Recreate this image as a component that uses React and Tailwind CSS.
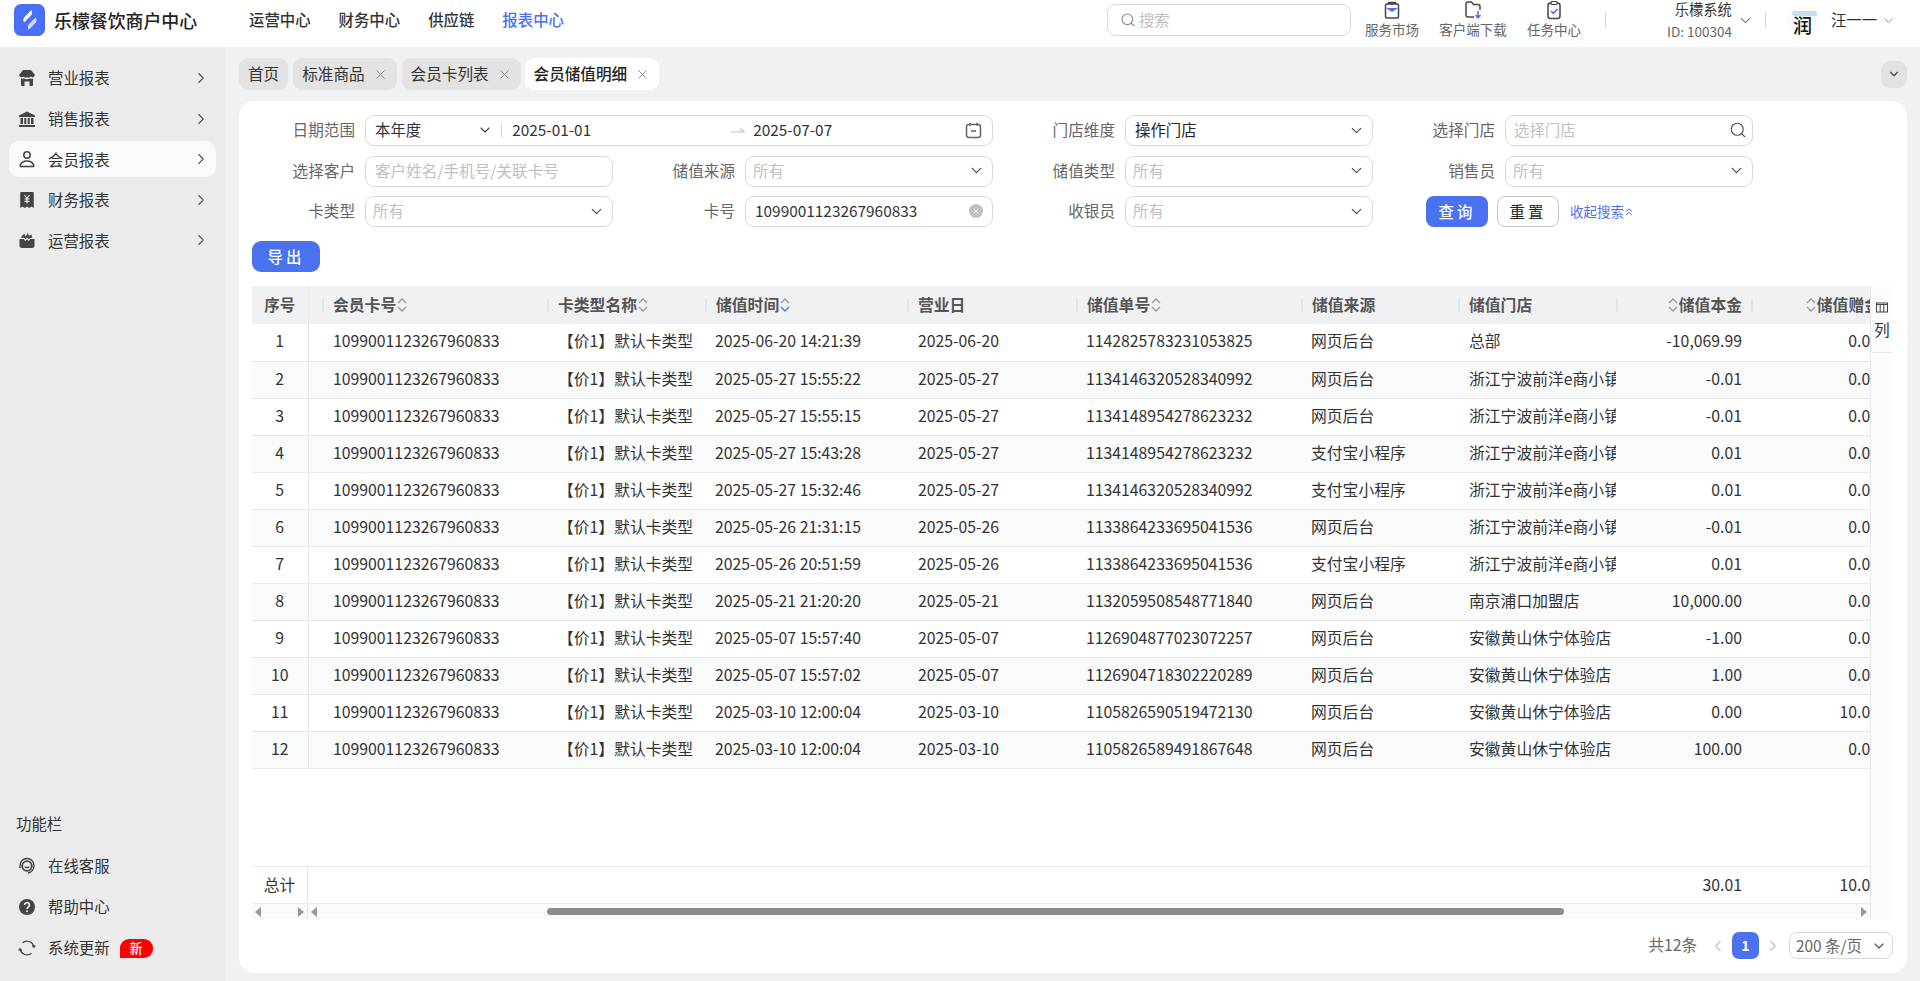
import React from "react";
import { ChevronDown, ChevronRight, ChevronLeft, Search, X } from "lucide-react";

const rows = [
  ["2025-06-20 14:21:39", "2025-06-20", "1142825783231053825", "网页后台", "总部", "-10,069.99", "0.00"],
  ["2025-05-27 15:55:22", "2025-05-27", "1134146320528340992", "网页后台", "浙江宁波前洋e商小镇店", "-0.01", "0.00"],
  ["2025-05-27 15:55:15", "2025-05-27", "1134148954278623232", "网页后台", "浙江宁波前洋e商小镇店", "-0.01", "0.00"],
  ["2025-05-27 15:43:28", "2025-05-27", "1134148954278623232", "支付宝小程序", "浙江宁波前洋e商小镇店", "0.01", "0.00"],
  ["2025-05-27 15:32:46", "2025-05-27", "1134146320528340992", "支付宝小程序", "浙江宁波前洋e商小镇店", "0.01", "0.00"],
  ["2025-05-26 21:31:15", "2025-05-26", "1133864233695041536", "网页后台", "浙江宁波前洋e商小镇店", "-0.01", "0.00"],
  ["2025-05-26 20:51:59", "2025-05-26", "1133864233695041536", "支付宝小程序", "浙江宁波前洋e商小镇店", "0.01", "0.00"],
  ["2025-05-21 21:20:20", "2025-05-21", "1132059508548771840", "网页后台", "南京浦口加盟店", "10,000.00", "0.00"],
  ["2025-05-07 15:57:40", "2025-05-07", "1126904877023072257", "网页后台", "安徽黄山休宁体验店", "-1.00", "0.00"],
  ["2025-05-07 15:57:02", "2025-05-07", "1126904718302220289", "网页后台", "安徽黄山休宁体验店", "1.00", "0.00"],
  ["2025-03-10 12:00:04", "2025-03-10", "1105826590519472130", "网页后台", "安徽黄山休宁体验店", "0.00", "10.00"],
  ["2025-03-10 12:00:04", "2025-03-10", "1105826589491867648", "网页后台", "安徽黄山休宁体验店", "100.00", "0.00"],
];

function StoreIcon() {
  return (
    <svg width="18" height="18" viewBox="0 0 18 18" fill="#444">
      <path d="M5 1h8l4 5a2.6 2.6 0 0 1-4.200 1.600A3.200 3.200 0 0 1 9 8.200a3.200 3.200 0 0 1-3.800-.6A2.600 2.600 0 0 1 1 6z" />
      <path d="M3 9.600c1 .3 2 .2 2.800-.2 2 1 4.400 1 6.400 0 .8.400 1.800.5 2.800.2V16a1 1 0 0 1-1 1h-2.500v-4.500H6.500V17H4a1 1 0 0 1-1-1z" />
    </svg>
  );
}

function BankIcon() {
  return (
    <svg width="18" height="18" viewBox="0 0 18 18" fill="#444">
      <path d="M9 1.500 17 5.500V7H1V5.500z" />
      <path d="M2.500 8h2.500v6H2.500zM6.300 8h2v6h-2zM9.700 8h2v6h-2zM13 8h2.500v6H13zM1 15h16v2H1z" />
    </svg>
  );
}

function UserIcon() {
  return (
    <svg width="18" height="18" viewBox="0 0 18 18" fill="none" stroke="#444" strokeWidth="1.500">
      <circle cx="9" cy="5" r="3.200" />
      <path d="M3 16.500c-.6 0-1-.5-.8-1.100C3 13 5.500 11 9 11s6 2 6.800 4.400c.2.600-.2 1.100-.8 1.100z" />
    </svg>
  );
}

function ReceiptIcon() {
  return (
    <svg width="18" height="18" viewBox="0 0 18 18">
      <path d="M3 1h12a.8.8 0 0 1 .8.8V17l-2.300-1.500L11.200 17 9 15.500 6.800 17l-2.300-1.500L2.200 17V1.800A.8.800 0 0 1 3 1z" fill="#444" />
      <path d="M6.500 4 9 7.500 11.500 4M9 7.500V12.500M6.500 8h5M6.500 10.300h5" stroke="#ebebeb" strokeWidth="1.200" fill="none" />
    </svg>
  );
}

function BagIcon() {
  return (
    <svg width="18" height="18" viewBox="0 0 18 18" fill="#444">
      <path d="M1.500 8h4.200l1.500 2L9 8.200 10.600 10l2-2h3.900v6.500a2.500 2.500 0 0 1-2.500 2.500H4a2.500 2.500 0 0 1-2.500-2.500z" />
      <path d="M3 6.800C3.500 5 5 3.500 6.500 3l1 2.500L10 2l1 3 2.500-1.500.8 3.300h-2.100l-1.500 1.400L9 6.600 7.400 8.200 6.200 6.800z" />
    </svg>
  );
}

function HeadsetIcon() {
  return (
    <svg width="18" height="18" viewBox="0 0 18 18" fill="none" stroke="#444">
      <path d="M2 11V8.500a7 7 0 0 1 14 0c0 4-2.500 7-6 7.500" strokeWidth="1.400" />
      <circle cx="9" cy="9" r="4.800" strokeWidth="1.800" />
      <path d="M6.800 9.500c.5 1.500 3.900 1.500 4.400 0" strokeWidth="1.200" />
    </svg>
  );
}

function HelpIcon() {
  return (
    <svg width="18" height="18" viewBox="0 0 18 18">
      <circle cx="9" cy="9" r="8" fill="#444" />
      <path d="M6.600 7a2.400 2.400 0 1 1 3.700 2c-.9.600-1.300 1-1.300 2" stroke="#ebebeb" strokeWidth="1.700" fill="none" />
      <circle cx="9" cy="13.300" r="1" fill="#ebebeb" />
    </svg>
  );
}

function RefreshIcon() {
  return (
    <svg width="18" height="18" viewBox="0 0 18 18" fill="none" stroke="#444" strokeWidth="1.200">
      <path d="M4.500 3.800A7 7 0 0 1 15.800 7.500" />
      <path d="M13.500 14.200A7 7 0 0 1 2.200 10.500" />
      <path d="M14.200 6.500 16 8.300l1.300-1.900M3.800 11.500 2 9.700.7 11.600" />
    </svg>
  );
}

function Logo() {
  return (
    <div className="w-[31px] h-[32px] rounded-[7px] bg-[#4a6ef5] flex items-center justify-center">
      <svg width="20" height="22" viewBox="0 0 20 22" fill="#fff">
        <path d="M11.500 1 5 7.500c-2 2-2 4 -1 6l7-7c1-1 1.500-3 .5-5.500z" />
        <path d="M15.500 8.500 9 15c-1 1-1.500 3-.5 6l6.500-6.500c2-2 2-4 .5-6z" opacity=".75" />
      </svg>
    </div>
  );
}

function TopIcon({ children }) {
  return (
    <svg width="20" height="20" viewBox="0 0 20 20" fill="none">
      {children}
    </svg>
  );
}

function TopAction({ label, icon }) {
  return (
    <div className="h-[40px] flex flex-col items-center text-[13.500px] leading-[18px] text-[#666]">
      <div className="h-[20px]">{icon}</div>
      <span className="whitespace-nowrap">{label}</span>
    </div>
  );
}

function Header() {
  return (
    <header className="h-[47px] bg-white flex items-center shrink-0 pb-[7px]">
      <div className="ml-[14px]">
        <Logo />
      </div>
      <div className="ml-[9px] w-[143px] text-[17.900px] font-medium text-[#222] whitespace-nowrap">乐檬餐饮商户中心</div>
      <nav className="ml-[52px] flex items-center gap-[28px] text-[15.400px] font-medium text-[#333]">
        <span>运营中心</span>
        <span>财务中心</span>
        <span>供应链</span>
        <span className="text-[#4a72ee]">报表中心</span>
      </nav>
      <div className="ml-[543px] w-[244px] h-[32px] rounded-[9px] border border-[#d9d9d9] flex items-center pl-[12px]">
        <Search size={16} color="#8c8c8c" strokeWidth={1.700} />
        <span className="ml-[3px] text-[15.400px] text-[#bfbfbf]">搜索</span>
      </div>
      <div className="ml-[14px] w-[216px] flex justify-between">
        <TopAction
          label="服务市场"
          icon={
            <TopIcon>
              <path d="M6.500 4V2.500h7V4M5 4h10a1.500 1.500 0 0 1 1.500 1.500v11A1.500 1.500 0 0 1 15 18H5a1.500 1.500 0 0 1-1.500-1.500v-11A1.500 1.500 0 0 1 5 4z" stroke="#444" strokeWidth="1.500" />
              <path d="M4 8h12l-6 4z" fill="#4a72ee" />
            </TopIcon>
          }
        />
        <TopAction
          label="客户端下载"
          icon={
            <TopIcon>
              <path d="M11 17H5a2 2 0 0 1-2-2V4a2 2 0 0 1 2-2h3.500l2 2.500H15a2 2 0 0 1 2 2V10" stroke="#444" strokeWidth="1.500" />
              <path d="M15 11v6M12.500 15l2.500 2.800 2.500-2.800" stroke="#4a72ee" strokeWidth="1.600" />
            </TopIcon>
          }
        />
        <TopAction
          label="任务中心"
          icon={
            <TopIcon>
              <rect x="4" y="3" width="12" height="15.500" rx="2.500" stroke="#444" strokeWidth="1.500" />
              <rect x="7" y="1.500" width="6" height="3" rx="1" fill="#fff" stroke="#444" strokeWidth="1.200" />
              <path d="m7 11 2.300 2.300L13.500 9" stroke="#4a72ee" strokeWidth="1.700" />
            </TopIcon>
          }
        />
      </div>
      <div className="ml-[24px] w-px h-[16px] bg-[#d9d9d9]" />
      <div className="ml-[61px] flex flex-col items-end -mt-[1px]">
        <span className="text-[14.300px] leading-[23px] text-[#333] whitespace-nowrap">乐檬系统</span>
        <span className="text-[13.500px] leading-[23px] text-[#666] whitespace-nowrap">ID: 100304</span>
      </div>
      <ChevronDown className="ml-[5px]" size={17} color="#777" strokeWidth={1.500} />
      <div className="ml-[11px] w-px h-[16px] bg-[#d9d9d9]" />
      <div className="ml-[20px] w-[33px] h-[31px] rounded-full bg-[#fbfbfb] overflow-hidden flex flex-col items-center">
        <div className="mt-[6px] ml-[6px] w-[26px] h-[5px] rounded-full bg-[#c4e0ee]" />
        <span className="-mt-[1px] text-[19px] leading-[20px] font-medium text-[#111]">润</span>
      </div>
      <span className="ml-[12px] text-[15.400px] text-[#333] whitespace-nowrap">汪一一</span>
      <ChevronDown className="ml-[4px]" size={15} color="#8c8c8c" strokeWidth={1.500} />
    </header>
  );
}

function SideItem({ icon, label, active, arrow, badge }) {
  return (
    <div className={`h-[36px] rounded-[10px] flex items-center pl-[9px] pr-[6px] ${active ? "bg-[#fafafa]" : ""}`}>
      <div className="w-[18px] h-[18px]">{icon}</div>
      <span className="ml-[12px] text-[15.400px] text-[#333] whitespace-nowrap">{label}</span>
      {badge && (
        <span className="ml-[10px] w-[33px] h-[19px] rounded-[9px] rounded-bl-none bg-[#ff0000] text-white text-[13px] font-medium flex items-center justify-center">
          {badge}
        </span>
      )}
      {arrow && <ChevronRight className="ml-auto" size={18} color="#555" strokeWidth={1.500} />}
    </div>
  );
}

function Sidebar() {
  return (
    <aside className="w-[225px] shrink-0 bg-[#ebebeb] flex flex-col px-[9px] pt-[13px] pb-[15px]">
      <div className="flex flex-col gap-[4.600px]">
        <SideItem icon={<StoreIcon />} label="营业报表" arrow />
        <SideItem icon={<BankIcon />} label="销售报表" arrow />
        <SideItem icon={<UserIcon />} label="会员报表" arrow active />
        <SideItem icon={<ReceiptIcon />} label="财务报表" arrow />
        <SideItem icon={<BagIcon />} label="运营报表" arrow />
      </div>
      <div className="mt-auto">
        <div className="ml-[7px] h-[22px] leading-[22px] text-[15.400px] text-[#333]">功能栏</div>
        <div className="mt-[14px] flex flex-col gap-[5px]">
          <SideItem icon={<HeadsetIcon />} label="在线客服" />
          <SideItem icon={<HelpIcon />} label="帮助中心" />
          <SideItem icon={<RefreshIcon />} label="系统更新" badge="新" />
        </div>
      </div>
    </aside>
  );
}

function Tab({ label, closable, active }) {
  return (
    <div className={`h-[32px] rounded-[9px] flex items-center px-[9px] text-[15.600px] whitespace-nowrap ${active ? "-ml-[1px] bg-white text-[#222] font-medium" : "bg-[#e3e3e3] text-[#333]"}`}>
      <span>{label}</span>
      {closable && <X className="ml-[8px]" size={15} color="#888" strokeWidth={1.500} />}
    </div>
  );
}

function Label({ children }) {
  return <span className="w-[126px] shrink-0 pr-[10px] pb-[1px] text-right text-[15.600px] text-[#666] whitespace-nowrap">{children}</span>;
}

function Field({ label, children, className = "" }) {
  return (
    <div className={`flex items-center h-[31px] ${className}`}>
      <Label>{label}</Label>
      <div className="flex-1 h-full pb-[1px] rounded-[9px] border border-[#d9d9d9] flex items-center text-[15.400px] text-[#333] min-w-0">{children}</div>
    </div>
  );
}

function SelectField({ label, value, dark }) {
  return (
    <Field label={label}>
      <span className={dark ? "ml-[9px] text-[#222]" : "ml-[7px] text-[#bfbfbf]"}>{value}</span>
      <ChevronDown className="ml-auto mr-[7px]" size={17} color="#444" strokeWidth={1.600} />
    </Field>
  );
}

function Filters() {
  return (
    <div className="grid grid-cols-[repeat(4,374px)] gap-x-[6px] gap-y-[9.500px]">
      <Field label="日期范围" className="col-span-2">
        <span className="ml-[9px] text-[#333]">本年度</span>
        <ChevronDown className="ml-[56px]" size={16} color="#444" strokeWidth={1.600} />
        <div className="ml-[8px] w-px h-[15px] bg-[#d9d9d9]" />
        <span className="ml-[10px] w-[218px]">2025-01-01</span>
        <svg width="16" height="8" viewBox="0 0 16 8" fill="none" stroke="#c4c4c4" strokeWidth="1.200">
          <path d="M1 6h13L10 2.500" />
        </svg>
        <span className="ml-[7px]">2025-07-07</span>
        <svg className="ml-auto mr-[10px]" width="17" height="17" viewBox="0 0 17 17" fill="none" stroke="#666" strokeWidth="1.500">
          <rect x="1.500" y="2.500" width="14" height="13" rx="2.500" />
          <path d="M5 .8v3M12 .8v3M6 9h5" />
        </svg>
      </Field>
      <SelectField label="门店维度" value="操作门店" dark />
      <Field label="选择门店">
        <span className="ml-[8px] text-[#bfbfbf]">选择门店</span>
        <Search className="ml-auto mr-[5px]" size={18} color="#555" strokeWidth={1.500} />
      </Field>
      <Field label="选择客户">
        <span className="ml-[9px] text-[#bfbfbf] text-[15.600px] whitespace-nowrap">客户姓名/手机号/关联卡号</span>
      </Field>
      <SelectField label="储值来源" value="所有" />
      <SelectField label="储值类型" value="所有" />
      <SelectField label="销售员" value="所有" />
      <SelectField label="卡类型" value="所有" />
      <Field label="卡号">
        <span className="ml-[9px] text-[#333]">1099001123267960833</span>
        <span className="ml-auto mr-[9px] w-[14px] h-[14px] rounded-full bg-[#bfbfbf] flex items-center justify-center">
          <X size={8} color="#fff" strokeWidth={3} />
        </span>
      </Field>
      <SelectField label="收银员" value="所有" />
      <div className="flex items-center h-[31px] pl-[47px]">
        <button className="w-[62px] h-[31px] rounded-[8px] bg-[#4a72ee] text-white text-[15.400px] font-medium tracking-[3px]">查询</button>
        <button className="ml-[9px] w-[62px] h-[31px] rounded-[8px] border border-[#c4c4c4] bg-white text-[#222] text-[15.400px] tracking-[3px]">重置</button>
        <span className="ml-[11px] text-[13.500px] text-[#4a72ee] whitespace-nowrap">收起搜索</span>
        <svg className="ml-[1px]" width="8" height="10" viewBox="0 0 8 10" fill="none" stroke="#4a72ee">
          <path d="M1 4.500 4 2l3 2.500M1 8l3-2.500L7 8" />
        </svg>
      </div>
    </div>
  );
}

function SortIcon({ active }) {
  return (
    <svg className="shrink-0" width="10" height="16" viewBox="0 0 10 16" fill="none" strokeWidth="1.300">
      <path d="M1 6 5 2l4 4" stroke="#999" />
      <path d="m1 10 4 4 4-4" stroke={active ? "#4a72ee" : "#999"} />
    </svg>
  );
}

function Th({ label, sort, sortBefore, right, active, noSep }) {
  return (
    <th className="p-0 font-bold text-[15.800px] text-[#555] text-left">
      <div className="flex items-center whitespace-nowrap overflow-hidden">
        {!noSep && <span className="w-[2px] h-[13px] shrink-0 bg-[#e2e3e6]" />}
        <div className={`flex items-center gap-[1px] ${right ? "ml-auto pr-[9px]" : "pl-[9px]"}`}>
          {sortBefore && <SortIcon />}
          <span>{label}</span>
          {sort && <SortIcon active={active} />}
        </div>
      </div>
    </th>
  );
}

function Table() {
  return (
    <table className="table-fixed w-[1637px] border-collapse">
      <colgroup>
        <col className="w-[56px]" />
        <col className="w-[14px]" />
        <col className="w-[225px]" />
        <col className="w-[158px]" />
        <col className="w-[202px]" />
        <col className="w-[169px]" />
        <col className="w-[225px]" />
        <col className="w-[157px]" />
        <col className="w-[158px]" />
        <col className="w-[135px]" />
        <col className="w-[138px]" />
      </colgroup>
      <thead>
        <tr className="h-[38px] bg-[#f0f1f3]">
          <th className="p-0 font-bold text-[15.400px] text-[#555] text-center border-r border-[#e6e7e9]">序号</th>
          <th className="p-0" />
          <Th label="会员卡号" sort />
          <Th label="卡类型名称" sort />
          <Th label="储值时间" sort active />
          <Th label="营业日" />
          <Th label="储值单号" sort />
          <Th label="储值来源" />
          <Th label="储值门店" />
          <Th label="储值本金" sortBefore right />
          <Th label="储值赠金" sortBefore right />
        </tr>
      </thead>
      <tbody className="text-[15.800px] text-[#333]">
        {rows.map((r, i) => (
          <tr key={i} className={`h-[37px] border-b border-[#e8e9eb] ${i % 2 === 1 ? "bg-[#f9fafa]" : ""}`}>
            <td className="p-0 pb-[2px] text-center border-r border-[#e8e9eb]">{i + 1}</td>
            <td className="p-0" />
            <td className="p-0 pb-[2px] pl-[11px] whitespace-nowrap">1099001123267960833</td>
            <td className="p-0 pb-[2px] pl-[11px] whitespace-nowrap">【价1】默认卡类型</td>
            <td className="p-0 pb-[2px] pl-[10px] whitespace-nowrap">{r[0]}</td>
            <td className="p-0 pb-[2px] pl-[11px] whitespace-nowrap">{r[1]}</td>
            <td className="p-0 pb-[2px] pl-[10px] whitespace-nowrap">{r[2]}</td>
            <td className="p-0 pb-[2px] pl-[10px] whitespace-nowrap">{r[3]}</td>
            <td className="p-0 pb-[2px] pl-[11px] whitespace-nowrap overflow-hidden">{r[4]}</td>
            <td className="p-0 pb-[2px] pr-[9px] text-right whitespace-nowrap">{r[5]}</td>
            <td className="p-0 pb-[2px] pr-[10px] text-right whitespace-nowrap">{r[6]}</td>
          </tr>
        ))}
      </tbody>
    </table>
  );
}

function ArrowLeft() {
  return <div className="w-0 h-0 border-y-[5px] border-y-transparent border-r-[6px] border-r-[#999]" />;
}

function ArrowRight() {
  return <div className="w-0 h-0 border-y-[5px] border-y-transparent border-l-[6px] border-l-[#999]" />;
}

function TotalAndScroll() {
  return (
    <div className="shrink-0">
      <div className="h-[38px] pb-[1px] border-y border-[#e8e9eb] flex items-center text-[15.800px] text-[#333]">
        <div className="w-[56px] h-full shrink-0 border-r border-[#e8e9eb] flex items-center justify-center">总计</div>
        <div className="w-[1443px] shrink-0 pr-[9px] text-right">30.01</div>
        <div className="w-[138px] shrink-0 pr-[10px] text-right">10.00</div>
      </div>
      <div className="h-[15px] bg-[#fafafa] flex items-center">
        <div className="w-[56px] h-full shrink-0 border-r border-[#e8e9eb] flex items-center justify-between px-[3px]">
          <ArrowLeft />
          <ArrowRight />
        </div>
        <div className="flex-1 h-full flex items-center px-[3px]">
          <ArrowLeft />
          <div className="ml-[230px] w-[1017px] h-[7px] rounded-full bg-[#8c8c8c]" />
          <div className="ml-auto">
            <ArrowRight />
          </div>
        </div>
      </div>
    </div>
  );
}

function ColumnTab() {
  return (
    <div className="w-[23px] shrink-0 bg-[#fafbfc] border-l border-[#e8e9eb]">
      <div className="h-[67px] border-b border-[#e8e9eb] flex flex-col items-center pt-[16px]">
        <svg width="12" height="11" viewBox="0 0 12 11" fill="none" stroke="#444">
          <rect x=".5" y="1" width="11" height="9" />
          <path d="M.5 2.500h11M4.200 2.500V10M7.800 2.500V10" />
        </svg>
        <span className="mt-[6px] text-[15.400px] leading-[20px] text-[#333]">列</span>
      </div>
    </div>
  );
}

function Pagination() {
  return (
    <div className="mt-[13px] h-[27px] flex items-center justify-end text-[15.600px] text-[#666]">
      <span className="-mt-[1px]">共12条</span>
      <ChevronLeft className="ml-[12px]" size={18} color="#bfbfbf" strokeWidth={1.500} />
      <span className="ml-[5px] w-[27px] h-[27px] rounded-[7px] bg-[#4a72ee] text-white font-bold text-[14px] flex items-center justify-center">1</span>
      <ChevronRight className="ml-[5px]" size={18} color="#bfbfbf" strokeWidth={1.500} />
      <div className="ml-[7px] w-[104px] h-[27px] rounded-[8px] border border-[#d9d9d9] flex items-center pl-[6px]">
        <span className="whitespace-nowrap text-[15.400px]">200 条/页</span>
        <ChevronDown className="ml-auto mr-[5px]" size={16} color="#555" strokeWidth={1.800} />
      </div>
    </div>
  );
}

export default function App() {
  return (
    <div className="h-[981px] w-[1920px] overflow-hidden flex flex-col bg-[#f0f1f3] font-['Noto_Sans_CJK_SC','Noto_Sans',sans-serif]">
      <Header />
      <div className="flex-1 flex min-h-0">
        <Sidebar />
        <main className="flex-1 min-w-0 pl-[14px] pr-[13px] pt-[11px]">
          <div className="flex gap-[5px] items-center">
            <Tab label="首页" />
            <Tab label="标准商品" closable />
            <Tab label="会员卡列表" closable />
            <Tab label="会员储值明细" closable active />
            <div className="ml-auto w-[26px] h-[27px] rounded-[9px] bg-[#e2e2e2] flex items-center justify-center">
              <ChevronDown size={14} color="#444" strokeWidth={2} />
            </div>
          </div>
          <section className="mt-[11px] h-[872px] rounded-[16px] bg-white pt-[14px] pl-[13px] pr-[14px]">
            <div className="-ml-[13px]">
              <Filters />
            </div>
            <button className="mt-[14px] block w-[68px] h-[31px] rounded-[9px] bg-[#4a72ee] text-white text-[15.400px] font-medium tracking-[3px]">导出</button>
            <div className="mt-[14px] h-[633px] flex">
              <div className="w-[1618px] shrink-0 flex flex-col overflow-hidden">
                <div className="flex-1 min-h-0 overflow-hidden">
                  <Table />
                </div>
                <TotalAndScroll />
              </div>
              <ColumnTab />
            </div>
            <Pagination />
          </section>
        </main>
      </div>
    </div>
  );
}
